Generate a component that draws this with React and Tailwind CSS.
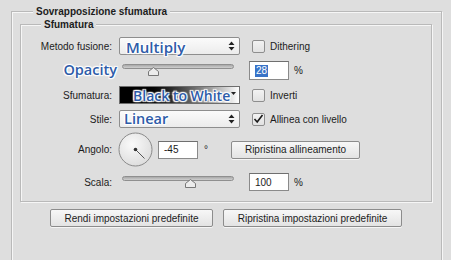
import React from "react";

const note =
  "font-['Open_Sans',sans-serif] font-semibold text-[#2d5ba8] leading-none whitespace-nowrap [text-shadow:0_0_2px_#fff,0_0_2px_#fff,1px_1px_1px_#fff,-1px_-1px_1px_#fff,1px_-1px_1px_#fff,-1px_1px_1px_#fff]";

function UpDown() {
  return (
    <svg width="7" height="10" viewBox="0 0 7 10" className="shrink-0">
      <path d="M3.5 0.5 L6.5 4 H0.5 Z M3.5 9.5 L6.5 6 H0.5 Z" fill="#222" />
    </svg>
  );
}

function Check({ checked, label }) {
  return (
    <div className="flex items-center ml-[12px]">
      <div className="w-[13px] h-[13px] rounded-[2px] border border-[#8e8e8e] bg-gradient-to-b from-[#f2f2f2] to-[#e2e2e2] flex items-center justify-center">
        {checked && (
          <svg width="11" height="10" viewBox="0 0 11 10">
            <path d="M1.5 5 L4.2 8 L9.5 1" stroke="#1a1a1a" strokeWidth="1.6" fill="none" />
          </svg>
        )}
      </div>
      <span className="ml-[5px]">{label}</span>
    </div>
  );
}

function Slider({ at }) {
  return (
    <div className="relative w-[112px] h-full ml-[9px]">
      <div className="mt-[3px] h-[5px] rounded-full border border-[#8f8f8f] bg-gradient-to-b from-[#a8a8a8] to-[#cfcfcf]" />
      <svg width="11" height="9" viewBox="0 0 11 9" className="absolute top-[6px]" style={{ left: at - 5 }}>
        <path d="M5.5 0.5 L10.5 4.5 V8.5 H0.5 V4.5 Z" fill="#ececec" stroke="#777" />
      </svg>
    </div>
  );
}

function Field({ value, selected, w = 40, h = 18 }) {
  return (
    <div
      className="flex items-center bg-white border border-[#8a8a8a] border-t-[#6f6f6f] pl-[5px]"
      style={{ width: w, height: h }}
    >
      {selected ? <span className="bg-[#3873c8] text-white px-px leading-[12px]">{value}</span> : value}
    </div>
  );
}

function Button({ children, className }) {
  return (
    <div
      className={
        "h-[18px] flex items-center justify-center rounded-[2px] border border-[#8c8c8c] bg-gradient-to-b from-[#f7f7f7] to-[#e3e3e3] shadow-[0_1px_0_#f5f5f5] " +
        className
      }
    >
      {children}
    </div>
  );
}

function Label({ children }) {
  return <div className="w-[92px] shrink-0 text-right pr-[1px]">{children}</div>;
}

export default function App() {
  return (
    <div className="w-[451px] h-[260px] overflow-hidden bg-[#dedede] text-[10px] text-[#1c1c1c] font-['Liberation_Sans',Arial,sans-serif] pt-[11px] pl-[11px]">
      {/* outer group */}
      <div className="w-[431px] h-[260px] border border-[#b9b9b9] shadow-[inset_1px_1px_0_#f6f6f6,1px_1px_0_#f6f6f6]">
        <div className="-mt-[7px] ml-[21px] w-fit px-[3px] bg-[#dedede] font-bold leading-[13px]">
          Sovrapposizione sfumatura
        </div>

        {/* inner group */}
        <div className="mt-[6px] ml-[8px] w-[412px] h-[178px] border border-[#b9b9b9] shadow-[inset_1px_1px_0_#f6f6f6,1px_1px_0_#f6f6f6]">
          <div className="-mt-[7px] ml-[20px] w-fit px-[3px] bg-[#dedede] font-bold leading-[13px]">Sfumatura</div>

          {/* Metodo fusione */}
          <div className="mt-[6px] h-[18px] flex items-center">
            <Label>Metodo fusione:</Label>
            <div className="ml-[6px] w-[121px] h-[18px] rounded-[2px] border border-[#8e8e8e] bg-gradient-to-b from-[#fbfbfb] to-[#ececec] flex items-center justify-between pl-[6px] pr-[4px]">
              <span className={note + " text-[15px] mt-[2px]"}>Multiply</span>
              <UpDown />
            </div>
            <Check label="Dithering" />
          </div>

          {/* Opacity */}
          <div className="mt-[6px] h-[19px] flex items-center">
            <div className="w-[96px] shrink-0 text-right">
              <span className={note + " text-[14.5px]"}>Opacity</span>
            </div>
            <div className="-ml-[4px] h-full flex">
              <Slider at={31} />
            </div>
            <div className="ml-[15px]">
              <Field value="28" selected h={19} />
            </div>
            <span className="ml-[5px]">%</span>
          </div>

          {/* Sfumatura */}
          <div className="mt-[6px] h-[18px] flex items-center">
            <Label>Sfumatura:</Label>
            <div className="ml-[6px] w-[121px] h-[18px] border border-[#6e6e6e] bg-gradient-to-r from-[#000] from-[20%] to-[#fff] flex items-center justify-between pl-[13px] pr-[3px]">
              <span className={note + " text-[14px] mt-[1px]"}>Black to White</span>
              <svg width="5" height="3" viewBox="0 0 5 3" className="mb-[4px] shrink-0">
                <path d="M0 0 H5 L2.5 3 Z" fill="#222" />
              </svg>
            </div>
            <Check label="Inverti" />
          </div>

          {/* Stile */}
          <div className="mt-[6px] h-[18px] flex items-center">
            <Label>Stile:</Label>
            <div className="ml-[6px] w-[121px] h-[18px] rounded-[2px] border border-[#8e8e8e] bg-gradient-to-b from-[#fbfbfb] to-[#ececec] flex items-center justify-between pl-[4px] pr-[4px]">
              <span className={note + " text-[14.5px] mt-[1px]"}>Linear</span>
              <UpDown />
            </div>
            <Check checked label="Allinea con livello" />
          </div>

          {/* Angolo */}
          <div className="mt-[5px] h-[33px] flex items-center">
            <Label>Angolo:</Label>
            <svg width="35" height="35" viewBox="0 0 35 35" className="ml-[5px]">
              <defs>
                <radialGradient id="dial" cx="0.4" cy="0.35" r="0.7">
                  <stop offset="0" stopColor="#fafafa" />
                  <stop offset="1" stopColor="#dcdcdc" />
                </radialGradient>
              </defs>
              <circle cx="17.5" cy="17.5" r="16.5" fill="url(#dial)" stroke="#8a8a8a" />
              <line x1="17.5" y1="17.5" x2="26.5" y2="26.5" stroke="#555" strokeWidth="1" />
              <circle cx="17.5" cy="17.5" r="1.8" fill="#333" />
            </svg>
            <div className="ml-[5px]">
              <Field value="-45" />
            </div>
            <div className="w-[33px] pl-[6px] self-start mt-[9px]">°</div>
            <Button className="w-[129px]">Ripristina allineamento</Button>
          </div>

          {/* Scala */}
          <div className="mt-[7px] h-[18px] flex items-center">
            <Label>Scala:</Label>
            <div className="h-full flex">
              <Slider at={68} />
            </div>
            <div className="ml-[15px]">
              <Field value="100" />
            </div>
            <span className="ml-[5px]">%</span>
          </div>
        </div>

        {/* bottom buttons */}
        <div className="mt-[7px] ml-[38px] flex gap-[10px]">
          <Button className="w-[163px]">Rendi impostazioni predefinite</Button>
          <Button className="w-[179px]">Ripristina impostazioni predefinite</Button>
        </div>
      </div>
    </div>
  );
}
